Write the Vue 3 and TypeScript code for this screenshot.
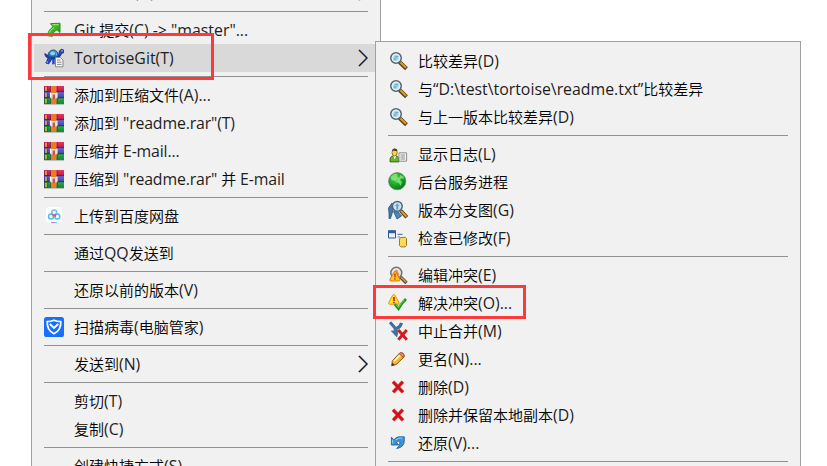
<script setup lang="ts">
interface Entry {
  kind: 'item' | 'separator'
  label?: string
  icon?: string
  submenu?: boolean
  active?: boolean
  marked?: boolean
  raised?: boolean
  tight?: boolean
}

interface Run {
  text: string
  latin: boolean
}

const sep: Entry = { kind: 'separator' }
const item = (label: string, icon = '', extra: Partial<Entry> = {}): Entry => ({
  kind: 'item',
  label,
  icon,
  ...extra,
})

// Splits a label into Han and Latin runs, which are set at slightly different sizes.
const runs = (label = ''): Run[] =>
  (label.match(/[\u4e00-\u9fff]+|[^\u4e00-\u9fff]+/g) ?? []).map((text) => ({
    text,
    latin: !/[\u4e00-\u9fff]/.test(text),
  }))

const mainMenu: Entry[] = [
  item('打开方式(H)', '', { submenu: true, raised: true }),
  sep,
  item('Git 提交(C) -> "master"...', 'commit'),
  item('TortoiseGit(T)', 'tortoise', { submenu: true, active: true, marked: true }),
  sep,
  item('添加到压缩文件(A)...', 'rar'),
  item('添加到 "readme.rar"(T)', 'rar', { tight: true }),
  item('压缩并 E-mail...', 'rar', { tight: true }),
  item('压缩到 "readme.rar" 并 E-mail', 'rar', { tight: true }),
  sep,
  item('上传到百度网盘', 'cloud'),
  sep,
  item('通过QQ发送到'),
  sep,
  item('还原以前的版本(V)'),
  sep,
  item('扫描病毒(电脑管家)', 'shield'),
  sep,
  item('发送到(N)', '', { submenu: true }),
  sep,
  item('剪切(T)'),
  item('复制(C)'),
  sep,
  item('创建快捷方式(S)'),
]

const gitMenu: Entry[] = [
  item('比较差异(D)', 'diff'),
  item('与“D:\\test\\tortoise\\readme.txt”比较差异', 'diff'),
  item('与上一版本比较差异(D)', 'diff'),
  sep,
  item('显示日志(L)', 'log'),
  item('后台服务进程', 'globe'),
  item('版本分支图(G)', 'graph'),
  item('检查已修改(F)', 'check'),
  sep,
  item('编辑冲突(E)', 'conflict'),
  item('解决冲突(O)...', 'resolve', { marked: true }),
  item('中止合并(M)', 'abort'),
  item('更名(N)...', 'rename'),
  item('删除(D)', 'remove'),
  item('删除并保留本地副本(D)', 'remove'),
  item('还原(V)...', 'revert'),
  sep,
]
</script>

<template>
  <div class="desktop">
    <svg class="defs" width="0" height="0" aria-hidden="true">
      <defs>
        <linearGradient id="gGreen" x1="0" y1="0" x2="1" y2="1">
          <stop offset="0" stop-color="#6fdc3e" /><stop offset="1" stop-color="#128a10" />
        </linearGradient>
        <radialGradient id="gGlobe" cx=".4" cy=".35" r=".7">
          <stop offset="0" stop-color="#45d845" /><stop offset=".65" stop-color="#159a22" /><stop offset="1" stop-color="#087014" />
        </radialGradient>
        <linearGradient id="gYellow" x1="0" y1="0" x2="1" y2="1">
          <stop offset="0" stop-color="#ffe96a" /><stop offset="1" stop-color="#dc8c08" />
        </linearGradient>
        <linearGradient id="gRed" x1="0" y1="0" x2="0" y2="1">
          <stop offset="0" stop-color="#e8336a" /><stop offset="1" stop-color="#b01c44" />
        </linearGradient>
        <linearGradient id="gViolet" x1="0" y1="0" x2="0" y2="1">
          <stop offset="0" stop-color="#6a6cd0" /><stop offset="1" stop-color="#423ea6" />
        </linearGradient>
        <linearGradient id="gLeaf" x1="0" y1="0" x2="0" y2="1">
          <stop offset="0" stop-color="#2dac4c" /><stop offset="1" stop-color="#0e8434" />
        </linearGradient>
        <linearGradient id="gShell" x1="0" y1="0" x2="0" y2="1">
          <stop offset="0" stop-color="#4aa6dc" /><stop offset="1" stop-color="#1b55a8" />
        </linearGradient>
      </defs>

      <symbol id="commit" viewBox="0 0 20 20">
        <path d="M6.500 3.700 16 3.200v9.300l-3-2.800c-2.800 1.600-4.200 3.500-4.500 6.600l-4.900-.6C4 11.700 5.800 8.800 9.200 6.900z" fill="url(#gGreen)" stroke="#1c9416" stroke-width="1" />
        <path d="M8.500 4.700h6.200M5 14.500c.3-3 2.200-5.400 5-6.600" stroke="#a4ee78" stroke-width="1" fill="none" />
      </symbol>

      <symbol id="tortoise" viewBox="0 0 20 20">
        <path d="M4.500 8 .8 5.600l.6 2.600L4 10.400 1.800 15l3 .8 3-4.600 5-.4 3.200-2.300L18 5h1.400L19.700 2l-2.400-.7-2 1.700-.5 4z" fill="#2b49c4" stroke="#14256e" stroke-width=".8" />
        <path d="M3.800 8.700C4 4.200 6.400 2 9.200 2c3 0 5 2.200 5.400 6.300-3 2-7.600 2.200-10.800.4z" fill="url(#gShell)" stroke="#152f6a" stroke-width=".8" />
        <path d="m6 5.200 1.700-1.600 2.500.1 1.100 1.800-1.200 1.800H7zM12 5l1.200 1.700-.9 1" fill="#86d4ee" />
        <path d="M17.400 2.900h1.500M2.500 13.800l1.500.4" stroke="#a6dcff" />
        <path d="M8.200 11v5.300h2.600V11" fill="#2b49c4" />
        <path d="M11.500 9.500h5l2.500 2.500v6.800h-7.500z" fill="#f5f5f5" stroke="#8a8a8a" />
        <path d="M13 12h3.500M13 14.200h4.500M13 16.400h4.500" stroke="#8c8c8c" />
      </symbol>

      <symbol id="rar" viewBox="0 0 20 20">
        <path d="M0 1h20v6H0z" fill="url(#gRed)" />
        <path d="M0 7h20v6H0z" fill="url(#gViolet)" />
        <path d="M0 13h20v6H0z" fill="url(#gLeaf)" />
        <path d="M0 6.700h20M0 12.800h20" stroke="#2a264a" stroke-width=".7" />
        <path d="M0 19.200h20" stroke="#777" stroke-width=".6" />
        <path d="M.4 1v18M3.800 1v18M6.300 1v18M13.300 1v18" stroke="#37223f" stroke-width=".6" opacity=".8" />
        <path d="M2 2v4M2 8v4M2 14v4" stroke="#f4c040" stroke-width="1.300" />
        <path d="M7 1h5.500v18H7z" fill="#ef7a24" />
        <path d="M6.800 8h6v5.500h-6z" fill="#e8dcd8" />
        <path d="M6.500 7.500v5.300M13 7.500v5.300" stroke="#fff" stroke-width="1.100" />
        <path d="M8.600 9.500h2.400V14H8.600z" fill="#c4583a" />
      </symbol>

      <symbol id="cloud" viewBox="0 0 20 20">
        <rect x="2" y="1" width="16" height="16" rx="3" fill="#fff" />
        <circle cx="10.200" cy="6.600" r="2.500" fill="none" stroke="#6cc4f4" stroke-width="1.500" />
        <circle cx="7" cy="10.400" r="2.500" fill="none" stroke="#4cc2f4" stroke-width="1.500" />
        <circle cx="13.300" cy="10.400" r="2.500" fill="none" stroke="#4cc2f4" stroke-width="1.500" />
        <path d="m8.300 8.200 3.700 2.100M12.100 8.200 8.600 10.400" stroke="#f35076" stroke-width="1.500" />
        <path d="M7 16.600h3" stroke="#ff4366" stroke-width=".8" /><path d="M10 16.600h3" stroke="#32b4ff" stroke-width=".8" />
      </symbol>

      <symbol id="shield" viewBox="0 0 20 20">
        <rect width="20" height="20" rx="2.600" fill="#176fff" />
        <path d="M10 3.200c-2 1-4.200 1.400-6.800 1.500-.2 5.500 2.100 9.700 6.800 12.100 4.700-2.400 7-6.600 6.800-12.100-2.600-.1-4.800-.5-6.800-1.500z" fill="none" stroke="#fff" stroke-width="1.700" />
        <path d="M5.800 7.100 10 11l4.200-3.900" fill="none" stroke="#fff" stroke-width="2" />
      </symbol>

      <symbol id="diff" viewBox="0 0 20 20">
        <path d="m11.500 11 7 6.700" stroke="#5a3c18" stroke-width="4" />
        <path d="m12.300 11.200 5.800 5.600" stroke="#dc981f" stroke-width="2.200" />
        <circle cx="8" cy="7" r="5.200" fill="#c4e6f4" stroke="#5c6469" stroke-width="1.600" />
        <circle cx="8" cy="7" r="4" fill="none" stroke="#eefaff" stroke-width=".8" />
        <path d="M6.700 5.300h3.800M5.600 7.100h4.200M5.500 8.800h3" stroke="#5f9fc4" stroke-width="1" />
      </symbol>

      <symbol id="log" viewBox="0 0 20 20">
        <path d="M2 17.900q-.4-5.900 3-5.900h3q3.300 0 3 5.900z" fill="#6bb424" stroke="#315e10" stroke-width=".9" />
        <path d="m5.300 11.800 1.400 3.800 1.400-3.800" fill="#fff" />
        <ellipse cx="6.600" cy="8.500" rx="2.600" ry="3.400" fill="#f4d250" stroke="#7b6020" stroke-width=".8" />
        <path d="M4.100 7.300q.2-2.800 2.700-2.800 2.400 0 2.500 2.600-2.700 0-3.500-.7z" fill="#4b3b17" />
        <path d="M11 8.800h7.600v8.400H11z" fill="#f4f4f4" stroke="#8d8d8d" />
        <path d="M12.500 11H17M12.500 13H17M12.500 15H17" stroke="#8d8d8d" />
      </symbol>

      <symbol id="globe" viewBox="0 0 20 20">
        <circle cx="9.200" cy="9.200" r="8.600" fill="url(#gGlobe)" stroke="#6b8a6c" stroke-width=".8" />
        <path d="m2.400 5 4-3.200 3.400.4-.8 2.200 2 1.400-2.500 2-.7 2-1.700-1.200-2.600-.5zM12.200 3l3 .9 1.200 3-2.800-.7-1.800 1.500 2 2.200-1 4.200-2-3-2.600-.8 1-3 2-1.600z" fill="#9deb8f" opacity=".7" />
      </symbol>

      <symbol id="graph" viewBox="0 0 20 20">
        <path d="M.5 8 4 3l1.500 5L4.500 12 2.500 18.500H1V13z" fill="#4478ae" stroke="#28507c" stroke-width=".8" />
        <path d="M5.500 11.500 9 19l4.500-3-3.500-4z" fill="#4d86bd" stroke="#29527b" stroke-width=".8" />
        <path d="m12.500 10.500 6.300 6.800" stroke="#5a3815" stroke-width="3.800" /><path d="m13 10.900 5.500 5.700" stroke="#dda02c" stroke-width="2" />
        <circle cx="9.300" cy="6.300" r="4.900" fill="#c3e6f5" stroke="#58656f" stroke-width="1.500" />
        <path d="M9.300 3.200 7 6h1.300v3.600h2V6h1.300z" fill="#6ba0c6" />
      </symbol>

      <symbol id="check" viewBox="0 0 20 20">
        <path d="M.5 3h7v7h-7z" fill="#e9eff8" stroke="#35598b" /><path d="M0 2.300h8v2.900H0z" fill="#2c5fa4" />
        <path d="M9.500 6.300h5M9.500 9h2.500" stroke="#5b82b3" stroke-width="1.200" />
        <path d="m12.400 9.700 4.800-.5 1.300 1.300v7l-1.300 1.400h-4.400l-1.300-1.300v-6.600z" fill="#ffd95a" stroke="#9e7b27" />
      </symbol>

      <symbol id="conflict" viewBox="0 0 20 20">
        <path d="m12.500 12 6 6" stroke="#5f4428" stroke-width="3.400" /><path d="m13 12.300 5.200 5" stroke="#cfa253" stroke-width="1.500" />
        <circle cx="8.300" cy="7.800" r="5.500" fill="#e8e2de" stroke="#68747b" stroke-width="1.500" />
        <path d="m8 5 2.700 5.500" stroke="#e08468" stroke-width="1.800" />
        <path d="M6.500 6.500q1-.6 1.600.6l3.700 7q.6 1.900-1.100 1.900H3q-1.700 0-1-1.900z" fill="#ffc91a" stroke="#ee5c1a" stroke-width=".9" />
        <path d="M7 8.500v4M7 13.300v1.500" stroke="#ad3528" stroke-width="1.300" />
      </symbol>

      <symbol id="resolve" viewBox="0 0 20 20">
        <path d="M5.800 1.500q.8 0 1.200.8l4 7.200q.7 1.700-.9 1.700H1.700Q.1 11.200.8 9.500l3.800-7.200q.4-.8 1.200-.8z" fill="#ffe528" stroke="#ef8a10" />
        <path d="M5.900 4v4M5.900 8.700v1.500" stroke="#d42e18" stroke-width="1.900" />
        <path d="m6.800 11.200 3.700 4.300q3.300-5.800 7.500-9.500" fill="none" stroke="#1c8a1a" stroke-width="2.800" /><path d="m7.500 11.300 3 3.100q3-5 6-7.600" fill="none" stroke="#55cc4a" stroke-width="1.200" />
      </symbol>

      <symbol id="abort" viewBox="0 0 20 20">
        <path d="M2 1.200 7 7l1.200 7M13.500 1.800Q12.500 6 8.500 7.500" fill="none" stroke="#3f6da0" stroke-width="3" />
        <path d="m2.600 9.800 6.400 6.700 2-7.500z" fill="#44719f" />
        <path d="m10.800 9.700 7.600 8.600M18.400 9.700l-7.600 8.600" stroke="#fff" stroke-width="4" opacity=".45" />
        <path d="m10.300 9 8.500 9.700M18.800 9l-8.500 9.700" stroke="#d41c20" stroke-width="3" />
      </symbol>

      <symbol id="rename" viewBox="0 0 20 20">
        <path d="m3.700 16.800.6-5 7.500-7.900q4.300-.8 4.500 3.900l-8 7.700z" fill="url(#gYellow)" stroke="#9a5a18" />
        <path d="m11.200 4.800 1.300-1.200q3.300-.3 3.700 3.400l-1.500 1.400q-.5-2.900-3.500-3.600z" fill="#f19478" stroke="#933c27" stroke-width=".7" />
        <path d="m3.600 16.900.6-3.400 2.700 2.500z" fill="#4c3629" /><path d="m6.300 12 5.400-5.500" stroke="#fffac0" stroke-width="1.600" />
      </symbol>

      <symbol id="remove" viewBox="0 0 20 20">
        <path d="m5 4.700 10 10.600M14.800 4.700 5.200 15.300" stroke="#e0a3a6" stroke-width="4" />
        <path d="m5 4.700 10 10.600M14.800 4.700 5.200 15.300" stroke="#d01218" stroke-width="2.900" />
      </symbol>

      <symbol id="revert" viewBox="0 0 20 20">
        <path d="M3.400 4.200v7.800h7.300L8.500 9.500q2.200-2.300 3.400-.5 1 2.900-3.200 6.600 7.500-1.500 7.600-7.700V3.800H11Q8 4 6 6.800z" fill="#3b94d6" stroke="#1a5790" stroke-width=".8" />
        <path d="m4.600 6.800v3.700M7.500 7Q10 4.700 14.500 5" stroke="#8ed5f6" fill="none" />
      </symbol>
    </svg>

    <nav class="menu main">
      <template v-for="(entry, i) in mainMenu" :key="i">
        <hr v-if="entry.kind === 'separator'" class="separator" />
        <div v-else class="row" :class="{ active: entry.active, raised: entry.raised, tight: entry.tight }">
          <svg class="icon"><use v-if="entry.icon" :href="`#${entry.icon}`" /></svg>
          <span class="label"><span v-for="(run, r) in runs(entry.label)" :key="r" :class="run.latin ? 'latin' : 'han'">{{ run.text }}</span></span>
          <svg v-if="entry.submenu" class="arrow" viewBox="0 0 10 18">
            <path class="warm" d="M.4 1l8 8-8 8" /><path class="cool" d="M1.700 1l8 8-8 8" /><path d="M1 1l8 8-8 8" />
          </svg>
          <span v-if="entry.marked" class="mark mark-main"></span>
        </div>
      </template>
    </nav>

    <nav class="menu sub">
      <template v-for="(entry, i) in gitMenu" :key="i">
        <hr v-if="entry.kind === 'separator'" class="separator" />
        <div v-else class="row">
          <svg class="icon"><use v-if="entry.icon" :href="`#${entry.icon}`" /></svg>
          <span class="label"><span v-for="(run, r) in runs(entry.label)" :key="r" :class="run.latin ? 'latin' : 'han'">{{ run.text }}</span></span>
          <span v-if="entry.marked" class="mark mark-sub"></span>
        </div>
      </template>
    </nav>
  </div>
</template>

<style>
body {
  margin: 0;
  background: #fff;
  overflow: hidden;
}
</style>

<style scoped>
.desktop {
  position: relative;
  width: 827px;
  height: 466px;
  overflow: hidden;
  background: #fff;
  color: #000;
  font: 15px/28px "Open Sans", "Noto Sans CJK SC", sans-serif;
}
.defs {
  position: absolute;
}
.menu {
  position: absolute;
  box-sizing: border-box;
  background: #f1f1f1;
  border: 1px solid #a0a0a0;
}
.main {
  left: 31px;
  top: -27px;
  width: 350px;
  height: 530px;
  padding: 5px 2px;
}
.sub {
  left: 375px;
  top: 41px;
  width: 426px;
  height: 460px;
  padding: 5px 2px;
}
.row {
  position: relative;
  display: flex;
  align-items: center;
  height: 28px;
  padding-left: 10px;
}
.raised {
  margin: -1px 0 5px;
}
.active {
  background: #d9d9d9;
}
.icon {
  flex: none;
  width: 20px;
  height: 20px;
}
.label {
  margin-left: 10px;
  flex: 1;
  height: 28px;
  white-space: pre;
}
.latin {
  font-size: 15.85px;
  line-height: 1;
  color: #1e1e1e;
}
.tight .latin {
  letter-spacing: -0.15px;
}
.han {
  font-weight: 350;
}
.arrow {
  width: 10px;
  height: 18px;
  margin-right: 10px;
  fill: none;
  stroke: #14142a;
  stroke-width: 1.1;
}
.warm {
  stroke: #f0b060;
}
.cool {
  stroke: #6fb0ee;
}
.separator {
  height: 1px;
  margin: 4px 10px;
  border: 0;
  background: #919191;
}
.mark {
  position: absolute;
  z-index: 2;
  box-sizing: border-box;
  border: 3px solid #fb3b3b;
}
.mark-main {
  left: -6px;
  top: -11px;
  width: 186px;
  height: 47px;
}
.mark-sub {
  left: -5px;
  top: -4px;
  width: 153px;
  height: 34px;
}
</style>
